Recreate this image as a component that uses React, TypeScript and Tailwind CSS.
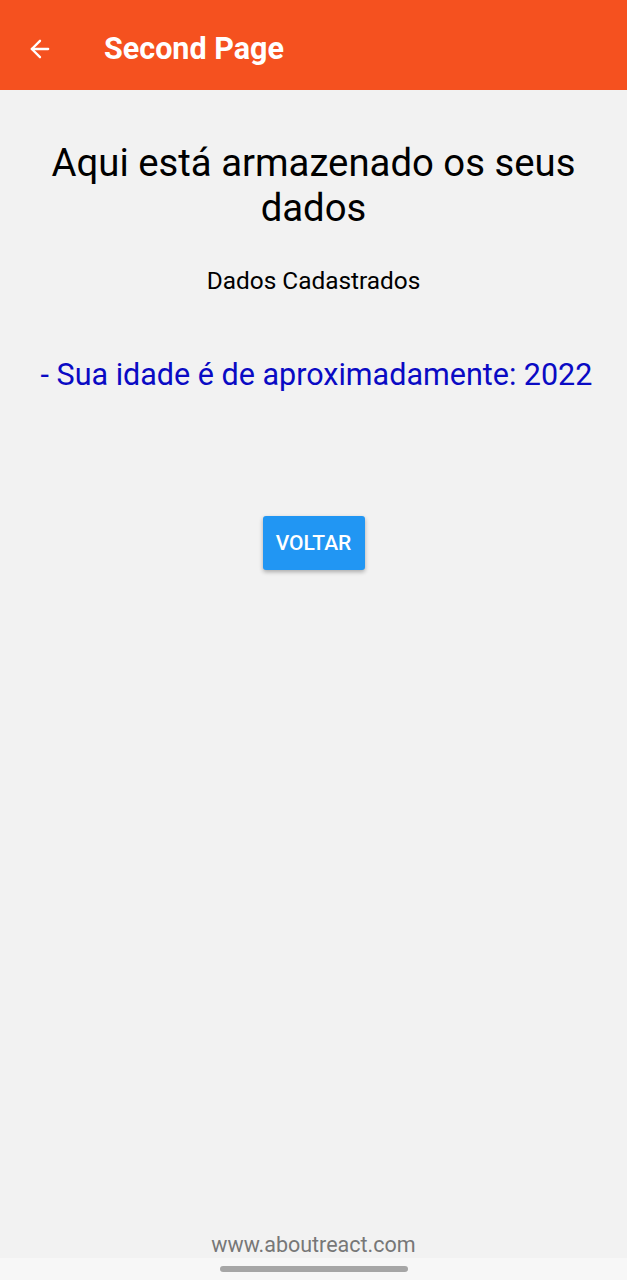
import { ArrowLeft } from "lucide-react";

export default function App() {
  return (
    <div className="flex h-[1280px] w-full flex-col bg-[#f2f2f2] font-['Roboto',sans-serif]">
      <header className="flex h-[90px] shrink-0 items-center bg-[#f5511f] px-[26px] pt-[8px]">
        <ArrowLeft className="h-[28px] w-[28px] text-white" strokeWidth={2} />
        <h1 className="ml-[50px] text-[30.5px] font-bold text-white">Second Page</h1>
      </header>

      <main className="flex flex-1 flex-col items-center px-[20px] pt-[50px]">
        <h2 className="text-center text-[38.3px] leading-[45px] text-black">
          Aqui está armazenado os seus dados
        </h2>
        <p className="mt-[33px] text-[24.4px] text-black">Dados Cadastrados</p>
        <p className="ml-[6px] mt-[52px] whitespace-nowrap text-[30.5px] text-[#0a0ac4]">
          - Sua idade é de aproximadamente: 2022
        </p>
        <button className="mt-[119px] h-[54px] w-[102px] rounded-[3px] bg-[#2196f3] text-[21px] font-medium text-white shadow-[0_2px_4px_rgba(0,0,0,0.3)]">
          VOLTAR
        </button>
      </main>

      <footer className="-mb-[3px] text-center text-[21.5px] text-[#777]">www.aboutreact.com</footer>
      <div className="flex h-[22px] shrink-0 items-center justify-center bg-[#f7f7f7]">
        <div className="h-[6px] w-[188px] rounded-full bg-[#a6a6a6]" />
      </div>
    </div>
  );
}
